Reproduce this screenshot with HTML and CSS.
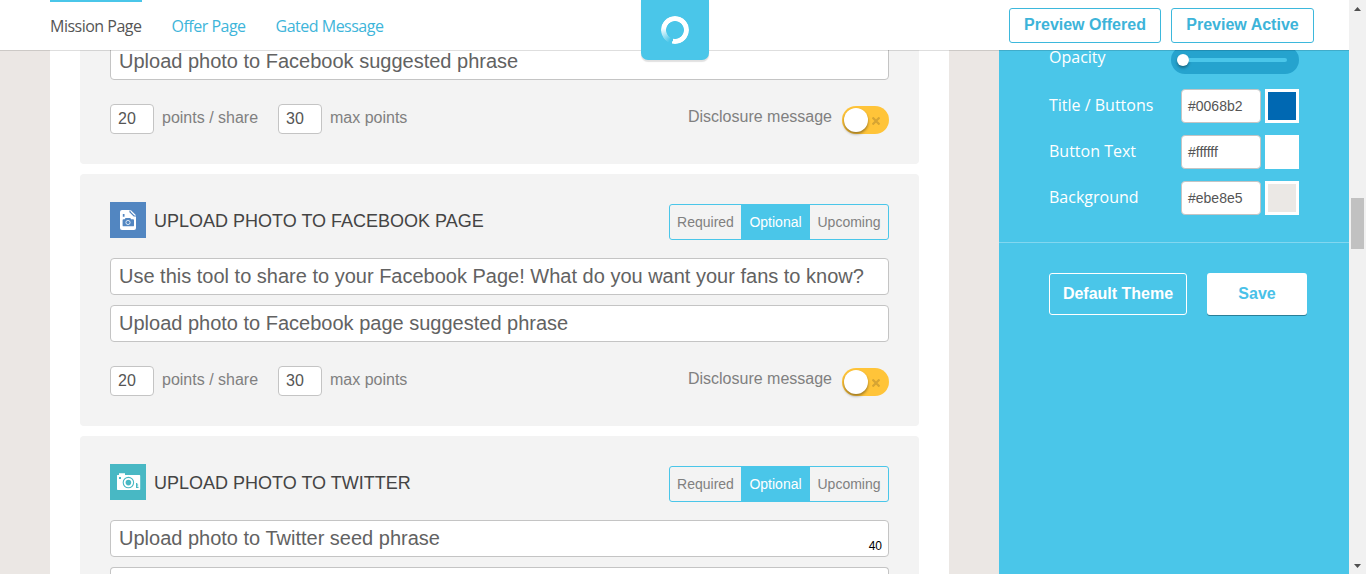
FILE: index.html
```
<!DOCTYPE html>
<html lang="en">
<head>
<meta charset="utf-8">
<title>Mission Page</title>
<link rel="stylesheet" href="styles.css">
</head>
<body>
<header class="topbar">
  <nav class="tabs">
    <a class="tab active">Mission Page</a>
    <a class="tab">Offer Page</a>
    <a class="tab">Gated Message</a>
  </nav>
  <div class="previews">
    <button class="preview">Preview Offered</button>
    <button class="preview">Preview Active</button>
  </div>
  <div class="logo"><div class="ring"></div></div>
</header>
<div class="shell">
  <main class="content">
    <section class="card card-first">
      <div class="field">Upload photo to Facebook suggested phrase</div>
      <div class="points">
        <span class="num">20</span><span class="unit unit-share">points / share</span>
        <span class="num">30</span><span class="unit">max points</span>
        <span class="disclosure">Disclosure message</span>
        <span class="toggle"><span class="knob"></span><svg class="cross" viewBox="0 0 8 8"><path d="M.5.5l7 7M7.500.5l-7 7"/></svg></span>
      </div>
    </section>
    <section class="card">
      <div class="card-head">
        <svg class="icon" viewBox="0 0 36 36"><rect width="36" height="36" fill="#5286c1"/><path fill="#fff" d="M12 8h8.700l5.300 5.300V26q0 2-2 2H12q-2 0-2-2V10q0-2 2-2z"/><path fill="none" stroke="#5286c1" stroke-width="1.200" d="M20 8.500v1.500l4 4h2"/><path fill="#5286c1" d="M12.800 12h1.700v2.700h-1.700zM15.500 16h4.800l.8 1.300h2q.9 0 .9.900v5.200q0 .9-.9.900H13.500q-.9 0-.9-.9v-5.200q0-.9.900-.9h1.200z"/><circle cx="18" cy="20.500" r="2.100" fill="none" stroke="#fff" stroke-opacity=".75" stroke-width="1"/></svg>
        <h2 class="title">UPLOAD PHOTO TO FACEBOOK PAGE</h2>
        <div class="segments"><span class="seg seg-required">Required</span><span class="seg seg-optional">Optional</span><span class="seg seg-upcoming">Upcoming</span></div>
      </div>
      <div class="field">Use this tool to share to your Facebook Page! What do you want your fans to know?</div>
      <div class="field">Upload photo to Facebook page suggested phrase</div>
      <div class="points">
        <span class="num">20</span><span class="unit unit-share">points / share</span>
        <span class="num">30</span><span class="unit">max points</span>
        <span class="disclosure">Disclosure message</span>
        <span class="toggle"><span class="knob"></span><svg class="cross" viewBox="0 0 8 8"><path d="M.5.5l7 7M7.500.5l-7 7"/></svg></span>
      </div>
    </section>
    <section class="card">
      <div class="card-head">
        <svg class="icon" viewBox="0 0 36 36"><rect width="36" height="36" fill="#48b8c4"/><path fill="#fff" d="M7.500 11h1.500V9.200h6V11h14.500q.7 0 .7.700v13.500q0 .7-.7.700H7.700q-.7 0-.7-.7V11.700q0-.7.500-.7z"/><path fill="#48b8c4" d="M9 13h2v2H9zM26 19h1.300v1.500h.9v.9h-.9v1.300h1.200V24H26z"/><circle cx="18.400" cy="18.600" r="5.200" fill="none" stroke="#48b8c4" stroke-width="1.100"/><circle cx="18.400" cy="18.600" r="2.800" fill="#48b8c4"/></svg>
        <h2 class="title">UPLOAD PHOTO TO TWITTER</h2>
        <div class="segments"><span class="seg seg-required">Required</span><span class="seg seg-optional">Optional</span><span class="seg seg-upcoming">Upcoming</span></div>
      </div>
      <div class="field">Upload photo to Twitter seed phrase<span class="count">40</span></div>
      <div class="field field-cut"></div>
    </section>
  </main>
  <aside class="theme">
    <div class="settings">
      <div class="setting setting-opacity"><span class="label">Opacity</span><span class="slider"><span class="handle"></span><span class="track"></span></span></div>
      <div class="setting"><span class="label">Title / Buttons</span><span class="hex">#0068b2</span><span class="swatch swatch-blue"></span></div>
      <div class="setting"><span class="label">Button Text</span><span class="hex">#ffffff</span><span class="swatch"></span></div>
      <div class="setting"><span class="label">Background</span><span class="hex">#ebe8e5</span><span class="swatch swatch-sand"></span></div>
    </div>
    <div class="actions"><button class="default">Default Theme</button><button class="save">Save</button></div>
  </aside>
</div>
<div class="scrollbar">
  <svg class="arrow" viewBox="0 0 17 17"><path d="M5 11h7L8.500 7z"/></svg>
  <div class="thumb"></div>
  <svg class="arrow arrow-down" viewBox="0 0 17 17"><path d="M5 7h7l-3.500 4z"/></svg>
</div>
</body>
</html>
```
FILE: styles.css
```
* { box-sizing: border-box; }
html { height: 100%; overflow: hidden; }
body {
  margin: 0;
  height: 574px;
  overflow: hidden;
  display: flex;
  background: #ebe7e4;
  font-family: "Liberation Sans", Arial, sans-serif;
}
button { font: bold 16px "Liberation Sans", Arial, sans-serif; padding: 0; border-radius: 3px; }

.topbar {
  position: fixed;
  top: 0;
  left: 0;
  width: 1349px;
  height: 51px;
  z-index: 2;
  display: flex;
  justify-content: space-between;
  padding: 0 35px 0 50px;
  background: #fff;
  background-clip: padding-box;
  border-bottom: 1px solid rgba(0, 0, 0, .13);
}
.tabs { display: flex; gap: 30px; }
.tab {
  height: 50px;
  border-top: 2px solid transparent;
  font: 16px/48px "Open Sans", sans-serif;
  letter-spacing: -.5px;
  color: #3eb5da;
  white-space: nowrap;
}
.tab.active { border-color: #4ac6e9; color: #555; }
.previews { display: flex; gap: 10px; padding-top: 8px; }
.preview { width: 152px; height: 35px; background: #fff; border: 1px solid #3db8dc; color: #3db4d9; padding-bottom: 2px; }
.preview + .preview { width: 143px; }
.logo {
  position: absolute;
  left: 641px;
  top: 0;
  width: 68px;
  height: 60px;
  display: grid;
  place-items: center;
  background: #4ac6e9;
  border-radius: 0 0 7px 7px;
  box-shadow: 0 2px 1px rgba(0, 0, 0, .12);
}
.ring {
  width: 28px;
  height: 28px;
  border-radius: 50%;
  background: conic-gradient(#fff 0 192deg, rgba(255, 255, 255, 0) 193deg 205deg, #fff 280deg);
  -webkit-mask: radial-gradient(circle, transparent 8.500px, #000 9.300px);
  mask: radial-gradient(circle, transparent 8.500px, #000 9.300px);
}

.shell { display: flex; width: 1349px; height: 574px; flex: none; padding-left: 50px; overflow: hidden; }
.content {
  display: flex;
  flex-direction: column;
  gap: 10px;
  width: 899px;
  height: 574px;
  flex: none;
  padding: 0 30px;
  background: #fff;
}
.card {
  display: flex;
  flex-direction: column;
  gap: 10px;
  flex: none;
  padding: 28px 30px 30px;
  background: #f3f3f3;
  border-radius: 4px;
}
.card-first { padding-top: 43px; }
.card:last-child { padding-bottom: 0; border-radius: 4px 4px 0 0; }
.card-head { display: flex; height: 46px; }
.icon { width: 36px; height: 36px; flex: none; }
.title { margin: 0 auto 0 8px; font-size: 18px; font-weight: normal; line-height: 38px; color: #444; }
.segments {
  display: flex;
  width: 220px;
  height: 36px;
  margin-top: 2px;
  border: 1px solid #4ac6e9;
  border-radius: 3px;
  font-size: 14px;
  line-height: 34px;
  text-align: center;
  color: #808080;
}
.seg-required { width: 71px; }
.seg-optional { width: 69px; background: #4ac6e9; color: #fff; }
.seg-upcoming { width: 78px; }
.field {
  display: flex;
  justify-content: space-between;
  height: 37px;
  padding: 0 6px 0 8px;
  background: #fff;
  border: 1px solid #c4c4c4;
  border-radius: 4px;
  font-size: 20px;
  line-height: 35px;
  color: #626262;
  white-space: nowrap;
}
.field-cut { height: 7px; border-bottom: 0; border-radius: 4px 4px 0 0; }
.count { align-self: flex-end; font-size: 12px; line-height: 19px; color: #000; }
.points { display: flex; margin-top: 14px; font-size: 16px; color: #808080; }
.num {
  width: 44px;
  height: 30px;
  padding-left: 7px;
  background: #fff;
  border: 1px solid #c4c4c4;
  border-radius: 4px;
  line-height: 28px;
  color: #555;
}
.unit { margin-left: 8px; line-height: 27px; }
.unit-share { width: 116px; }
.disclosure { margin-left: auto; line-height: 25px; }
.toggle {
  display: flex;
  align-items: center;
  justify-content: space-between;
  width: 47px;
  height: 28px;
  margin: 2px 0 0 10px;
  padding: 0 9px 0 2px;
  background: #ffc439;
  border-radius: 14px;
}
.knob { width: 24px; height: 24px; border-radius: 50%; background: #fff; box-shadow: 0 2px 3px rgba(0, 0, 0, .4); }
.cross { width: 8px; height: 8px; margin-top: 1px; fill: none; stroke: #d6a433; stroke-width: 2.200; }

.theme { width: 350px; height: 574px; flex: none; margin-left: auto; background: #4ac6e9; color: #fff; }
.settings {
  display: flex;
  flex-direction: column;
  gap: 12px;
  height: 243px;
  padding: 46px 50px 0;
  border-bottom: 1px solid #82d7f0;
}
.setting { display: flex; gap: 4px; }
.setting-opacity { margin-bottom: 3px; }
.label { margin-right: auto; font: 16px/32px "Open Sans", sans-serif; }
.setting-opacity .label { line-height: 22px; }
.slider { display: flex; align-items: center; width: 128px; height: 28px; padding: 0 12px 0 6px; border-radius: 14px; background: #25a3ce; }
.handle { width: 12px; height: 12px; flex: none; border-radius: 50%; background: #fff; box-shadow: 0 2px 3px rgba(0, 0, 0, .35); }
.track { flex: 1; height: 4px; border-radius: 0 2px 2px 0; background: #4ac6e9; }
.hex { width: 80px; height: 34px; padding-left: 6px; background: #fff; border: 1px solid #c4c4c4; border-radius: 4px; font-size: 14px; line-height: 32px; color: #555; }
.swatch { width: 34px; height: 34px; border: 3px solid #fff; background: #fff; }
.swatch-blue { background: #0068b2; }
.swatch-sand { background: #ebe8e5; }
.actions { display: flex; gap: 20px; padding: 30px 0 0 50px; }
.default { width: 138px; height: 42px; background: transparent; border: 1px solid #fff; color: #fff; }
.save { width: 100px; height: 42px; background: #fff; border: 0; color: #4ac1e8; box-shadow: 0 1px 0 #2a7f98; }

.scrollbar { display: flex; flex: none; flex-direction: column; width: 17px; height: 574px; background: #f1f1f1; }
.arrow { width: 17px; height: 17px; flex: none; fill: #505050; }
.thumb { width: 13px; height: 51px; margin: 181px 0 auto 2px; background: #c1c1c1; }
```
